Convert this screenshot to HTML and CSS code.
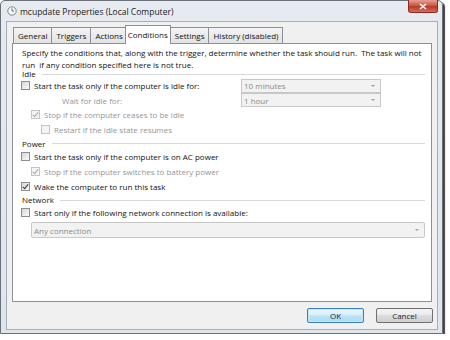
FILE: index.html
```html
<!DOCTYPE html>
<html lang="en">
<head>
    <meta charset="UTF-8">
    <title>mcupdate Properties (Local Computer)</title>
    <link rel="stylesheet" href="styles.css">
</head>
<body>
    <div class="window">
        <div class="titlebar">
            <svg class="app-icon" viewBox="0 0 10 10">
                <circle cx="5" cy="5" r="4.2" fill="#f4f6f8" stroke="#7d8690" stroke-width="1"/>
                <path d="M5 2.4V5h2" fill="none" stroke="#55606b" stroke-width="0.9"/>
            </svg>
            <span class="title">mcupdate Properties (Local Computer)</span>
            <div class="close">
                <svg viewBox="0 0 8 7" width="8" height="7">
                    <path d="M1 1l6 5M7 1L1 6" stroke="#fff" stroke-width="1.6"/>
                </svg>
            </div>
        </div>

        <div class="client">
            <div class="tabs">
                <div class="tab">General</div>
                <div class="tab">Triggers</div>
                <div class="tab">Actions</div>
                <div class="tab active">Conditions</div>
                <div class="tab">Settings</div>
                <div class="tab">History (disabled)</div>
            </div>

            <div class="panel">
                <p class="intro">Specify the conditions that, along with the trigger, determine whether the task should run.&nbsp; The task will not<br>run&nbsp; if any condition specified here is not true.</p>

                <div class="group idle"><span>Idle</span><div class="rule"></div></div>
                <div class="row first">
                    <span class="cb"></span>
                    <span class="label">Start the task only if the computer is idle for:</span>
                    <div class="select">10 minutes<span class="arrow"></span></div>
                </div>
                <div class="row wait">
                    <span class="label muted">Wait for idle for:</span>
                    <div class="select">1 hour<span class="arrow"></span></div>
                </div>
                <div class="row lvl1">
                    <span class="cb off checked"></span>
                    <span class="label muted">Stop if the computer ceases to be idle</span>
                </div>
                <div class="row lvl2">
                    <span class="cb off"></span>
                    <span class="label muted">Restart if the idle state resumes</span>
                </div>

                <div class="group power"><span>Power</span><div class="rule"></div></div>
                <div class="row">
                    <span class="cb"></span>
                    <span class="label">Start the task only if the computer is on AC power</span>
                </div>
                <div class="row lvl1">
                    <span class="cb off checked"></span>
                    <span class="label muted">Stop if the computer switches to battery power</span>
                </div>
                <div class="row">
                    <span class="cb checked"></span>
                    <span class="label">Wake the computer to run this task</span>
                </div>

                <div class="group network"><span>Network</span><div class="rule"></div></div>
                <div class="row net">
                    <span class="cb"></span>
                    <span class="label">Start only if the following network connection is available:</span>
                </div>
                <div class="select wide">Any connection<span class="arrow"></span></div>
            </div>

            <div class="buttons">
                <button class="btn default">OK</button>
                <button class="btn">Cancel</button>
            </div>
        </div>
    </div>
</body>
</html>
```

FILE: styles.css
```css
body {
    margin: 0;
    background: #fff;
    font-family: 'Open Sans', 'Liberation Sans', sans-serif;
    font-size: 8px;
    color: #111;
}

.window {
    width: 443px;
    height: 334px;
    box-sizing: border-box;
    border: 1px solid #6b7079;
    border-radius: 5px 5px 0 0;
    background: linear-gradient(#e6ebf1, #dfe5ec);
    padding: 0 4px 3px 5px;
    display: flex;
    flex-direction: column;
    box-shadow: 2px 2px 1px rgba(0, 0, 0, 0.75);
}

/* title bar */
.titlebar {
    height: 20px;
    display: flex;
    align-items: center;
}
.app-icon {
    width: 10px;
    height: 10px;
    margin: 0 3px 0 1px;
}
.title {
    font-size: 8.5px;
    color: #1b1b1b;
}
.close {
    margin-left: auto;
    align-self: flex-start;
    margin-top: -1px;
    width: 30px;
    height: 13px;
    box-sizing: border-box;
    border: 1px solid #8a2a22;
    border-top: none;
    border-radius: 0 0 3px 3px;
    background: linear-gradient(#e8a093, #c8513f 50%, #b93a28 55%, #d0705a);
    display: flex;
    align-items: center;
    justify-content: center;
}

/* dialog body */
.client {
    flex: 1;
    background: #f0f0f0;
    border: 1px solid #a5afba;
    display: flex;
    flex-direction: column;
}

.tabs {
    display: flex;
    align-items: flex-start;
    height: 19px;
    margin: 3px 0 -1px 6px;
    position: relative;
    z-index: 1;
}
.tab {
    box-sizing: border-box;
    height: 16px;
    margin-top: 2px;
    margin-right: -1px;
    padding: 0 4px;
    border: 1px solid #8c8f96;
    border-bottom: none;
    background: linear-gradient(#f4f4f4, #e2e2e2);
    line-height: 15px;
    white-space: nowrap;
}
.tab.active {
    height: 19px;
    margin: 0 -1px 0 -2px;
    padding: 0 2px;
    background: #fff;
    line-height: 17px;
    position: relative;
    z-index: 2;
}

.panel {
    flex: 1;
    background: #fff;
    border: 1px solid #8c8f96;
    margin: 0 5px;
    padding: 3px 6px 0 8px;
}

.intro {
    margin: 0 0 0 1px;
    line-height: 11.5px;
    white-space: nowrap;
}

.group {
    display: flex;
    align-items: center;
    line-height: 8px;
    margin-left: 1px;
}
.group.idle { height: 8px; }
.group.power { height: 11px; margin-top: 1px; }
.group.network { height: 12px; }
.rule {
    flex: 1;
    margin-left: 6px;
    border-top: 1px solid #d5d9dd;
}

.row {
    display: flex;
    align-items: center;
    height: 15px;
    white-space: nowrap;
}
.row.wait { height: 14px; padding-left: 41px; }
.row.net { height: 13px; }
.row.lvl1 { padding-left: 10px; }
.row.lvl2 { padding-left: 20px; }
.label { flex: 1; }
.muted { color: #959595; }

.cb {
    flex: none;
    width: 9px;
    height: 9px;
    box-sizing: border-box;
    border: 1px solid #8e8f8f;
    background: linear-gradient(135deg, #d8d8d8, #fafafa);
    margin-right: 4px;
    position: relative;
}
.cb.off {
    border-color: #c4c4c4;
    background: #f4f4f4;
}
.cb.checked::after {
    content: '';
    position: absolute;
    left: 2px;
    top: 0;
    width: 2px;
    height: 5px;
    border: solid #333;
    border-width: 0 1.2px 1.2px 0;
    transform: rotate(40deg);
}
.cb.off.checked::after { border-color: #a8a8a8; }

.select {
    box-sizing: border-box;
    width: 140px;
    height: 14px;
    margin-right: 44px;
    border: 1px solid #c8c8c8;
    background: #f2f2f2;
    color: #8b8b8b;
    padding-left: 2px;
    display: flex;
    align-items: center;
    position: relative;
}
.select.wide {
    width: auto;
    height: 16px;
    margin: 3px 0 0 10px;
    border-radius: 2px;
}
.arrow {
    position: absolute;
    right: 5px;
    top: 50%;
    margin-top: -1px;
    border: 2.5px solid transparent;
    border-top: 2.5px solid #a0a0a0;
    border-bottom: none;
}

.buttons {
    height: 27px;
    box-sizing: border-box;
    padding: 6px 4px 0 0;
    display: flex;
    justify-content: flex-end;
    gap: 12px;
}
.btn {
    width: 57px;
    height: 15px;
    padding: 0;
    border: 1px solid #707070;
    border-radius: 2px;
    background: linear-gradient(#f3f3f3, #ebebeb 45%, #dddddd 50%, #cfcfcf);
    font: inherit;
    color: #1e1e1e;
}
.btn.default {
    border-color: #3c7fb1;
    background: linear-gradient(#eaf6fd, #d9f0fc 45%, #bee6fd 50%, #a7d9f5);
    box-shadow: inset 0 0 0 1px #c9e7f7;
}
```
